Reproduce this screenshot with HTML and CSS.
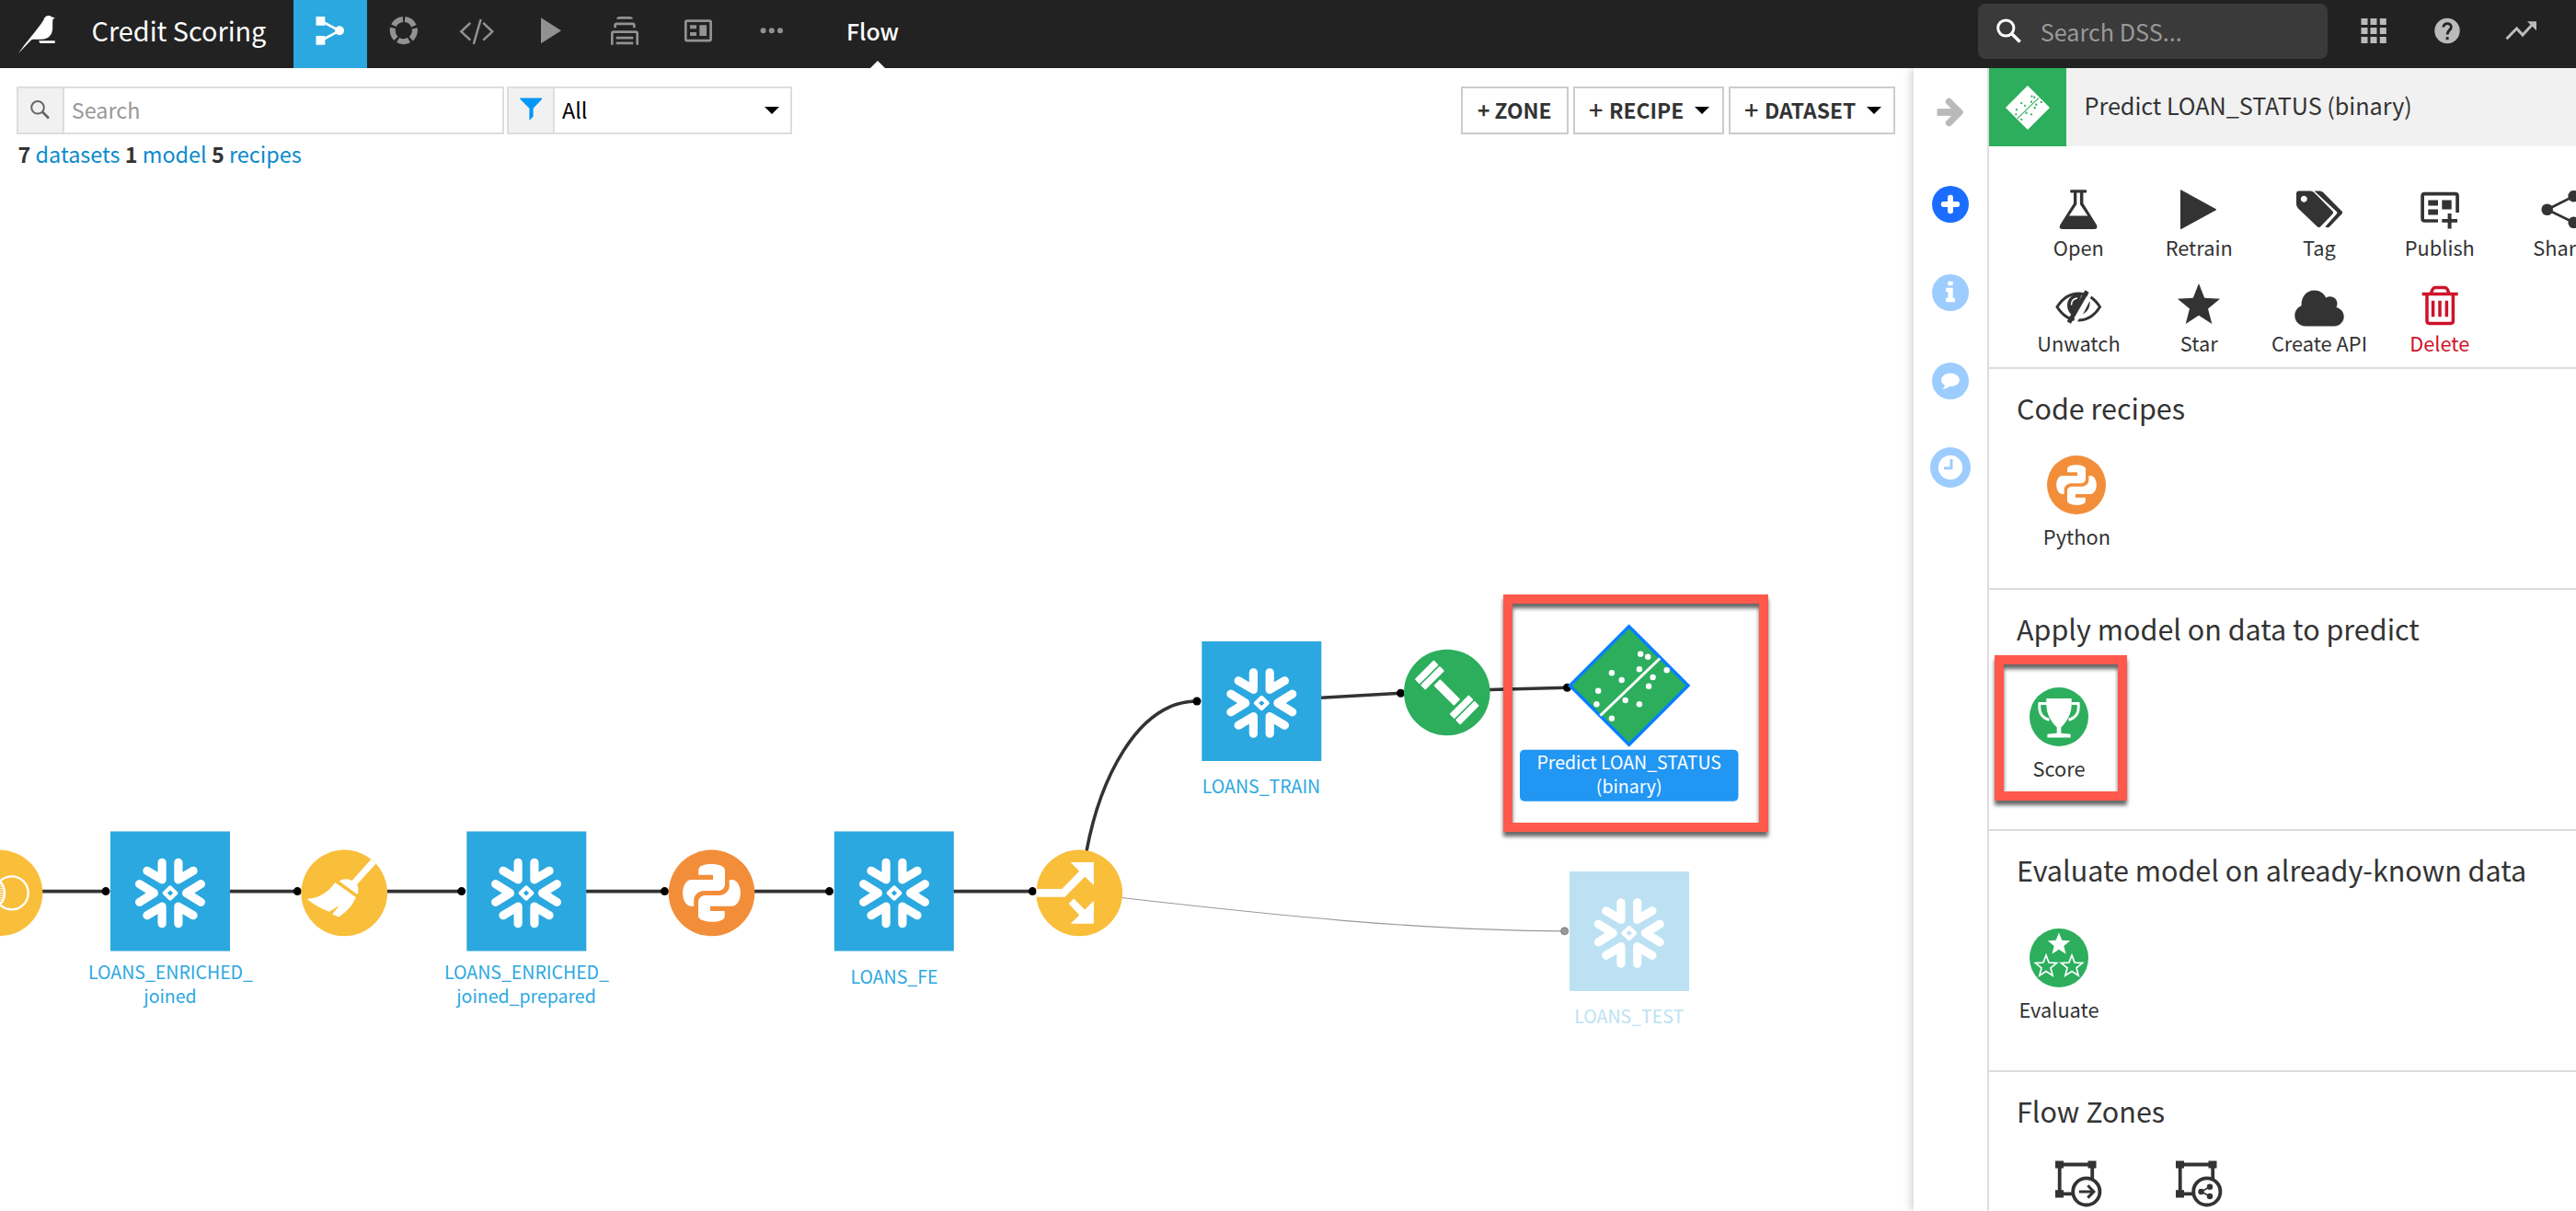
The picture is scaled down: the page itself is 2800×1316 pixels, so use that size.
FILE: index.html
```html
<!DOCTYPE html>
<html lang="en">
<head>
<meta charset="utf-8">
<title>Credit Scoring - Flow</title>
<link rel="stylesheet" href="styles.css">
</head>
<body>
<svg class="defs" width="0" height="0" aria-hidden="true">
  <defs>
    <symbol id="snow" viewBox="-40 -40 80 80" overflow="visible">
      <g fill="none" stroke="#fff" stroke-width="9.2" stroke-linecap="round" stroke-linejoin="round">
        <path d="M33.4-9.8 17.6 0l15.8 9.8M-33.4-9.8-17.6 0l-15.8 9.8"/>
        <path d="M8.9-33.2v18.6l16.2-9.6M-8.9-33.2v18.6l-16.2-9.6M8.9 33.2V14.6l16.2 9.6M-8.9 33.2V14.6l-16.2 9.6"/>
        <path stroke-width="4.4" d="M0-6 6.2 0 0 6-6.2 0z"/>
      </g>
    </symbol>
    <g id="python" fill="#fff">
      <path id="snake" d="M-14.2-19.7V-25C-14.2-29.5-8-31.3 0-31.3S14.5-29 14.5-24.5V-10C14.5-5 11-2.5 6-2.5H-8C-14-2.5-19.3 2-19.3 8v6.3H-22C-28 14.3-31.4 7-31.4 0S-28-14.3-22-14.3H1.5v-5.4z"/>
      <use href="#snake" transform="rotate(180)"/>
    </g>
    <g id="scatter">
      <path fill="none" stroke="currentColor" stroke-width="3" d="M33.5-29.5-31.3 32.7"/>
      <g fill="currentColor">
        <circle cx="12.5" cy="-34.3" r="3.2"/><circle cx="20.5" cy="-31.3" r="3.2"/><circle cx="11.2" cy="-17.7" r="3.2"/>
        <circle cx="-18.8" cy="-13.7" r="3.2"/><circle cx="-8" cy="-6" r="3.2"/><circle cx="41" cy="-16.7" r="3.2"/>
        <circle cx="25.9" cy="-9" r="3.2"/><circle cx="21.4" cy=".7" r="3.2"/><circle cx="-33.5" cy="5.7" r="3.2"/>
        <circle cx="-35.3" cy="20.3" r="3.2"/><circle cx="-4" cy="16" r="3.2"/><circle cx="11.2" cy="20.3" r="3.2"/>
        <circle cx="-18.8" cy="35.7" r="3.2"/>
      </g>
    </g>
    <path id="star" d="M0-24.3 6.2-8.5 23.1-7.5 10 3.2 14.3 19.7 0 10.5-14.3 19.7-10 3.2-23.1-7.5-6.2-8.5z"/>
    <g id="zone">
      <path fill="none" stroke="#333" stroke-width="3.8" d="M-5 11.3h-15.3v-31.8h35.5V-4"/>
      <path fill="#333" d="M-25-24.6h9v8.2h-9zM10.5-24.6h9v8.2h-9zM-25 7.2h9v8.2h-9z"/>
      <circle cx="8.8" cy="8.9" r="14.6" fill="#fff" stroke="#333" stroke-width="3.8"/>
    </g>
  </defs>
</svg>

<header class="topbar">
  <div class="logo">
    <svg width="90" height="74" viewBox="0 0 90 74"><path fill="#fff" d="M47.5 21.5c.6-2.600 2.800-4.400 5.300-4.400 1.600 0 2.600.5 3.500 1.500l3.400.6-2.200 1.800c-.4 2.500-.4 5-.3 8.500.2 8-4.200 13.200-12.200 13.200H36.500c-1.600 0-2.500.5-4 2.200L20 58c4-6 9-12.300 14-18.500 4.500-5.700 10-12 13.500-18z"/><path fill="#fff" d="M42 44.300h17.700v2.600H43.500z"/></svg>
  </div>
  <div class="project">Credit Scoring</div>
  <nav class="nav">
    <span class="tab active"><svg viewBox="0 0 80 74"><path fill="#fff" d="M24.500 18h9.800v9.800h-9.800zM24.500 38.900h9.800v9.800h-9.800z"/><path stroke="#fff" stroke-width="2.600" fill="none" d="M33 24.500 50 33.300 33 42.500"/><circle cx="50" cy="33.300" r="5" fill="#fff"/></svg></span>
    <span class="tab"><svg viewBox="0 0 80 74"><circle cx="39.800" cy="33.100" r="12.100" fill="none" stroke="#929292" stroke-width="6" stroke-dasharray="12.500 2.705" stroke-dashoffset="-1.350" transform="rotate(-90 39.800 33.100)"/></svg></span>
    <span class="tab"><svg viewBox="0 0 80 74"><path fill="none" stroke="#929292" stroke-width="2.500" d="M32.300 24.800 22.300 34.300l10 9.300M46.200 24.800l10 9.500-10 9.300M43.600 21l-7.800 26.800"/></svg></span>
    <span class="tab"><svg viewBox="0 0 80 74"><path fill="#929292" d="M29 19.300 51 33.300 29 47.200z"/></svg></span>
    <span class="tab"><svg viewBox="0 0 80 74"><g fill="none" stroke="#929292" stroke-width="2.700"><path fill="#929292" stroke="none" d="M31 20.800c.5-1.800 1.500-2.700 3.200-2.700h11.600c1.700 0 2.700.9 3.200 2.700z"/><path d="M29.600 30.300v-2.800q0-1.700 1.700-1.700h17.300q1.700 0 1.700 1.700v2.800M26.300 48.800V36.500q0-1.800 1.800-1.800h23.800q1.800 0 1.800 1.800v12.300M30.700 41.100h18.600M30.700 46.900h18.600"/></g></svg></span>
    <span class="tab"><svg viewBox="0 0 80 74"><rect x="26.300" y="22.600" width="27.300" height="21.500" rx="1.500" fill="none" stroke="#929292" stroke-width="2.700"/><path fill="#929292" d="M31 27.300h7v4h-7zM31 35h7v4h-7zM41.300 27.300h7.700V39h-7.700z"/></svg></span>
    <span class="tab"><svg viewBox="0 0 80 74"><g fill="#929292"><circle cx="30.600" cy="33.300" r="3"/><circle cx="39.800" cy="33.300" r="3"/><circle cx="49" cy="33.300" r="3"/></g></svg></span>
  </nav>
  <div class="current">Flow</div>
  <div class="top-search">
    <svg width="50" height="56" viewBox="0 0 50 56"><circle cx="30.300" cy="26.500" r="8.600" fill="none" stroke="#fff" stroke-width="3"/><path stroke="#fff" stroke-width="3.600" d="M36.300 32.300l9.300 9.200"/></svg>
    <span>Search DSS...</span>
  </div>
  <div class="top-icons">
    <svg viewBox="0 0 80 74"><g fill="#bbb"><path d="M26.500 20h7v7h-7zM36.500 20h7v7h-7zM46.800 20h7v7h-7zM26.500 30h7v7h-7zM36.500 30h7v7h-7zM46.800 30h7v7h-7zM26.500 40h7v7h-7zM36.500 40h7v7h-7zM46.800 40h7v7h-7z"/></g></svg>
    <svg viewBox="0 0 80 74"><circle cx="40" cy="33.500" r="13.700" fill="#bbb"/><path fill="none" stroke="#222" stroke-width="2.900" d="M35.900 29.600c0-2.400 1.800-4 4.200-4s4.200 1.600 4.200 3.800c0 3.200-4.200 3.400-4.200 8.100"/><path fill="#222" d="M38.600 40.200h3v3h-3z"/></svg>
    <svg viewBox="0 0 80 74"><path fill="none" stroke="#bbb" stroke-width="3" d="M24.500 42.300l11-11.300 6.500 7 12-13"/><path fill="#bbb" d="M47 23.200h10v10z"/></svg>
  </div>
</header>

<main class="main">
  <section class="flow">
    <div class="toolbar">
      <div class="field search">
        <span class="addon"><svg viewBox="20 96 48 48"><circle cx="41" cy="116.800" r="6.800" fill="none" stroke="#666" stroke-width="2"/><path stroke="#666" stroke-width="2.600" d="M46 121.500l7 7"/></svg></span>
        <span class="ph">Search</span>
      </div>
      <div class="field filter">
        <span class="addon"><svg viewBox="0 0 48 48"><path fill="#0497f8" d="M12.300 10.500h23.500l.3 1.200-9.500 10v9l-4.200 4.200V21.700l-10-10z"/></svg></span>
        <span class="val">All</span>
        <i class="caret"></i>
      </div>
      <div class="buttons">
        <div class="btn zone"><span class="plus">+</span>ZONE</div>
        <div class="btn recipe"><span class="plus">+</span>RECIPE<i class="caret"></i></div>
        <div class="btn dataset"><span class="plus">+</span>DATASET<i class="caret"></i></div>
      </div>
    </div>
    <p class="counts"><b>7</b> <a>datasets</a> <b>1</b> <a>model</a> <b>5</b> <a>recipes</a></p>

    <svg class="graph" width="2080" height="1133" viewBox="0 183 2080 1133">
      <g fill="none" stroke="#333" stroke-width="3.600">
        <path d="M46 968.600h69M250 968.600h73M421 968.600h81M637 968.600h85M820 968.600h82M1036 968.600h86"/>
        <path d="M1181 925C1195 850 1235 762 1301 762M1436 758.200l86.500-4.900M1619 749.500l84.500-2.200"/>
      </g>
      <path fill="none" stroke="#999" stroke-width="1.200" d="M1219 975.500C1380 994 1540 1011 1700 1011.800"/>
      <g fill="#000">
        <circle cx="115" cy="968.600" r="4.500"/><circle cx="323.300" cy="968.600" r="4.500"/><circle cx="501.700" cy="968.600" r="4.500"/>
        <circle cx="722.400" cy="968.600" r="4.500"/><circle cx="901.500" cy="968.600" r="4.500"/><circle cx="1122.300" cy="968.600" r="4.500"/>
        <circle cx="1301" cy="762" r="4.500"/><circle cx="1522.500" cy="753.300" r="4.500"/><circle cx="1703.500" cy="747.300" r="4.500"/>
      </g>
      <circle cx="1700.600" cy="1011.800" r="4" fill="#999" stroke="#808080"/>

      <g transform="translate(-.5 970.400)">
        <circle r="46.800" fill="#f9be3a"/>
        <g fill="none" stroke="#fff" stroke-width="2.400"><circle cx="-12.500" r="18"/><circle cx="13.200" r="18"/></g>
        <path stroke="#fff" stroke-width="1" d="M-2-10h4M-3.500-7.500h7M-4-5h8M-4.500-2.500h9M-4.500 0h9M-4.500 2.500h9M-4 5h8M-3.500 7.500h7M-2 10h4"/>
      </g>
      <g transform="translate(374.200 970.400)">
        <circle r="46.800" fill="#f9be3a"/>
        <path fill="#fff" d="M29-36.500 34.500-32 14-9.500C15.500-6 15.700-2 14.300 1.700L-5.500-13C-1-15.800 4-15.800 8.400-13.300zM-10-11.300 12.600 4.700C9.500 13 3 20.500-6 26l-7-3 7.500-9.300L-16.400 20.300C-25 17-34 12.500-40.400 6.300-28 6.500-17-1-10-11.300z"/>
      </g>
      <g transform="translate(773.500 970.400)"><circle r="46.800" fill="#f28e3a"/><use href="#python"/></g>
      <g transform="translate(1173.200 970.400)">
        <circle r="46.800" fill="#f9be3a"/>
        <path fill="#fff" d="M-46.600-4.300H-19L0-23.700-9.600-33.300h25.300v25L6-17.700-15.700 4.300h-30.900zM-6.100 6 6 18l9.700-9.700v25H-9.600L0 24-11.500 11.700z"/>
      </g>
      <g transform="translate(1572.800 752.500)">
        <circle r="46.800" fill="#2cae5d"/>
        <g transform="rotate(45)" fill="#fff"><rect x="-35" y="-14.700" width="7.400" height="29.400" rx="1"/><rect x="-26" y="-14.700" width="7.400" height="29.400" rx="1"/><rect x="-15.500" y="-4.900" width="31" height="9.800" rx="1"/><rect x="18.600" y="-14.700" width="7.400" height="29.400" rx="1"/><rect x="27.600" y="-14.700" width="7.400" height="29.400" rx="1"/></g>
      </g>

      <g fill="#2ba8df">
        <rect x="120" y="903.500" width="130" height="130"/><rect x="507.300" y="903.500" width="130" height="130"/>
        <rect x="906.800" y="903.500" width="130" height="130"/><rect x="1306.300" y="697" width="130" height="130"/>
        <rect x="1706" y="947" width="130" height="130" fill="#bce1f3"/>
      </g>
      <use href="#snow" x="145" y="930.500" width="80" height="80"/>
      <use href="#snow" x="532" y="930.500" width="80" height="80"/>
      <use href="#snow" x="932" y="930.500" width="80" height="80"/>
      <use href="#snow" x="1331.300" y="724" width="80" height="80"/>
      <use href="#snow" x="1730.800" y="974" width="80" height="80"/>

      <g transform="translate(1770.700 745)" color="#fff"><path fill="#2cae5d" stroke="#087fff" stroke-width="3.400" d="M0-64.300 64.300 0 0 64.300-64.300 0z"/><use href="#scatter"/></g>
      <rect x="1652" y="814.700" width="237.500" height="56" rx="5" fill="#2196f3"/>

      <g class="labels" text-anchor="middle">
        <text x="185.500" y="1064">LOANS_ENRICHED_</text><text x="185" y="1090">joined</text>
        <text x="572.500" y="1064">LOANS_ENRICHED_</text><text x="572" y="1090">joined_prepared</text>
        <text x="972" y="1068.700">LOANS_FE</text>
        <text x="1371" y="861.700">LOANS_TRAIN</text>
        <text class="faded" x="1770.700" y="1111.800">LOANS_TEST</text>
        <text class="picked" x="1770.700" y="836">Predict LOAN_STATUS</text><text class="picked" x="1770.700" y="862">(binary)</text>
      </g>
    </svg>
    <div class="marker marker-model"></div>
  </section>

  <aside class="rail">
    <svg viewBox="-22 -22 44 44"><path fill="none" stroke="#b9b9b9" stroke-width="7.400" stroke-linecap="round" stroke-linejoin="round" d="M-1.500-11.500 10 0-1.500 11.500"/><path stroke="#b9b9b9" stroke-width="7.800" d="M-14.500 0H8" stroke-linecap="butt"/></svg>
    <svg viewBox="-22 -22 44 44"><circle r="20" fill="#1a6dff"/><path stroke="#fff" stroke-width="6" stroke-linecap="round" d="M-7.200 0H7.200M0-7.200V7.200"/></svg>
    <svg viewBox="-22 -22 44 44"><circle r="20" fill="#9dccff"/><path fill="#fff" d="M-2.700-12.200h5.400v4.500h-5.400zM-5-5.300h7.700V5.700H5v4.600H-5V5.700h2.300V-1H-5z"/></svg>
    <svg viewBox="-22 -22 44 44"><circle r="20" fill="#9dccff"/><ellipse cy="-1.200" rx="10" ry="7.200" fill="#fff"/><path fill="#fff" d="M-6 3.500c0 2-.8 3.800-2.500 5.300 3 0 5.500-1 7.500-3.300z"/></svg>
    <svg viewBox="-22 -22 44 44"><circle r="22" fill="#9dccff"/><circle r="13.200" fill="#fff"/><path fill="none" stroke="#9dccff" stroke-width="3" d="M1-9V.7h-8"/></svg>
  </aside>

  <aside class="panel">
    <div class="panel-head">
      <span class="badge"><svg viewBox="-42 -42.500 84 85"><g transform="translate(0 .5)"><path fill="#fff" d="M0-24 24 0 0 24-24 0z"/><g transform="scale(.36)" color="#2cae5d"><use href="#scatter"/></g></g></svg></span>
      <span class="panel-title">Predict LOAN_STATUS (binary)</span>
    </div>
    <div class="actions">
      <div class="act"><svg viewBox="-30 -30 60 60"><path fill="#333" fill-rule="evenodd" d="M-8-17.800H8.300q.9 0 .9 1.600t-.9 1.700H5.400V-3L20 20.500q1.500 4.400-2 4.400h-35.800q-3.600 0-2-4.400L-5-3v-11.500h-3q-.9 0-.9-1.700t.9-1.600zM-1.700-14.500V-2L-10 10.500h20.300L1.900-2v-12.500z"/></svg><span>Open</span></div>
      <div class="act"><svg viewBox="-30 -30 60 60"><path fill="#333" stroke="#333" stroke-linejoin="round" d="M-19.500-17.300 18.800 3.800l-38.300 20.900z"/></svg><span>Retrain</span></div>
      <div class="act"><svg viewBox="-30 -30 60 60"><path fill="#333" fill-rule="evenodd" d="M-25-13.500q0-3 3-3H-9.500q2 0 3.600 1.500L14.500 5.400q1.400 1.500 0 3L1 22.400q-1.500 1.400-3 0L-23 2.400q-2-2-2-4.400zM-16.700-11.300a3.500 3.500 0 1 0 .01 0z"/><path fill="#333" d="M-5.500-16.500H.5q2 0 3.600 1.500L24.500 5.400q1.400 1.500 0 3L11 22.400q-1.800 1.600-4.500-.2L18.800 8.500q1.200-1.300 0-2.600z"/></svg><span>Tag</span></div>
      <div class="act"><svg viewBox="-30 -30 60 60"><path fill="none" stroke="#333" stroke-width="3.700" d="M-2 16h-14.500q-2.400 0-2.400-2.400V-11q0-2.400 2.400-2.400h33.200q2.400 0 2.400 2.400V7"/><path fill="#333" d="M-12.700-6.500H-2v6h-10.700zM-12.700 3.500H-2v6h-10.700zM2.300-6.500h10.400v10H2.300zM8.600 8h4v16.500h-4z"/><path fill="#333" d="M2.300 14H19v3.800H2.300z"/></svg><span>Publish</span></div>
      <div class="act"><svg viewBox="-30 -30 60 60"><path fill="none" stroke="#333" stroke-width="2.800" d="M14.700-10.800-14.300 3.800l29 14"/><g fill="#333"><circle cx="-14.300" cy="3.800" r="6.300"/><circle cx="14.700" cy="-10.800" r="6.300"/><circle cx="14.700" cy="17.800" r="6.300"/></g></svg><span>Share</span></div>
      <div class="act"><svg viewBox="-30 -30 60 60"><path fill="none" stroke="#333" stroke-width="3" d="M-23 5.500C-17-4 -9-9 .3-9S17.500-4 23.500 5.500C17.500 15 9.500 20 .3 20S-17 15-23 5.500z"/><path fill="#333" d="M4-8.500C-5-10-12-4-12 3.500c0 5 2.500 9.500 6.500 12z"/><path fill="none" stroke="#fff" stroke-width="1.600" d="M-7.500 3.500c0-4 2.500-7 6.500-7.500"/><path stroke="#fff" stroke-width="4" d="M15-12-4.500 24"/><path stroke="#333" stroke-width="4.800" d="M9.500-11.500-10.200 22.500"/><path fill="#333" d="M12.500-1C13 5 11 10 5 13.500z"/></svg><span>Unwatch</span></div>
      <div class="act"><svg viewBox="-30 -30 60 60"><use href="#star" y="4.300" fill="#333"/></svg><span>Star</span></div>
      <div class="act"><svg viewBox="-30 -30 60 60"><path fill="#333" d="M-15 26.500C-21.500 26.500-26.700 21.300-26.700 15c0-4.800 3-9 7.300-10.700C-20-5-14-12.500-5.500-12.500c5.800 0 10.500 3.200 12.700 8C12.500-7.500 19.500-4.500 19.500 2c0 1.500-.4 2.900-1.200 4 5 1 8.400 5 8.400 10 0 5.800-4.700 10.500-10.700 10.500z"/></svg><span>Create API</span></div>
      <div class="act danger"><svg viewBox="-30 -30 60 60"><g fill="none" stroke="#ce1228" stroke-width="3.500"><path d="M-19.300-8.600h39M-9.500-9c1-4.500 2-6.600 4.500-6.600H5.300c2.500 0 3.500 2.100 4.500 6.600M-14-8.500v29.300q0 2.600 2.600 2.600h23.200q2.600 0 2.600-2.600V-8.500M-7.400-1.200v17.500M0-1.200v17.500M7.400-1.200v17.500"/></g></svg><span>Delete</span></div>
    </div>
    <div class="section code">
      <h2>Code recipes</h2>
      <div class="items"><div class="item"><svg viewBox="-32 -32 64 64"><circle r="32" fill="#f28e3a"/><use href="#python" transform="scale(.695)"/></svg><span>Python</span></div></div>
    </div>
    <div class="section">
      <h2>Apply model on data to predict</h2>
      <div class="items round"><div class="item"><svg viewBox="-32 -32 64 64"><circle r="32" fill="#2cae5d"/><path fill="#fff" d="M-13.700-20h27.400v4C14-8 12.500 1 2.300 11.500v6.300l10.300 1v3.800h-25.200v-3.800l10.300-1v-6.300C-12.500 1-14-8-13.700-16z"/><path fill="none" stroke="#fff" stroke-width="3" d="M-13.500-14.600h-7.600C-22-5-19.500 1-10.500 3.200M13.500-14.600h7.600C22-5 19.500 1 10.500 3.200"/></svg><span>Score</span></div></div>
    </div>
    <div class="section">
      <h2>Evaluate model on already-known data</h2>
      <div class="items round"><div class="item"><svg viewBox="-32 -32 64 64"><circle r="32" fill="#2cae5d"/><use href="#star" fill="#fff" transform="translate(0 -14.700) scale(.53)"/><g fill="none" stroke="#fff" stroke-width="3.400"><use href="#star" transform="translate(-14 9.300) scale(.5)"/><use href="#star" transform="translate(14 9.300) scale(.5)"/></g></svg><span>Evaluate</span></div></div>
    </div>
    <div class="section last">
      <h2>Flow Zones</h2>
      <div class="items zones">
        <div class="item"><svg viewBox="-30 -30 60 60"><use href="#zone"/><path fill="none" stroke="#333" stroke-width="3" d="M.8 8.900h15M10.300 2.200l6.600 6.700-6.600 6.700"/></svg></div>
        <div class="item"><svg viewBox="-30 -30 60 60"><use href="#zone"/><path fill="none" stroke="#333" stroke-width="1.600" d="M12 3.800 2.500 9l9.500 5"/><g fill="#333"><circle cx="2.500" cy="9" r="3.200"/><circle cx="12" cy="3.800" r="3.200"/><circle cx="12" cy="14" r="3.200"/></g></svg></div>
      </div>
    </div>
    <div class="marker marker-score"></div>
  </aside>
</main>
</body>
</html>
```
FILE: styles.css
```css
* { box-sizing: border-box; }
body {
  margin: 0;
  width: 2800px;
  height: 1316px;
  overflow: hidden;
  background: #fff;
  color: #333;
  font-family: "Noto Sans CJK SC", "Noto Sans", sans-serif;
}
svg { display: block; flex: none; }
.defs { position: absolute; }

/* top bar */
.topbar { display: flex; height: 74px; background: #222; color: #fff; }
.project { width: 229px; padding-left: 9.600px; font-size: 28.800px; line-height: 65px; white-space: nowrap; }
.nav { display: flex; }
.tab { width: 80px; height: 74px; }
.tab.active { background: #2ba8df; }
.current {
  position: relative;
  margin-left: 41px;
  width: 68px;
  font-size: 24.800px;
  font-weight: 500;
  line-height: 67px;
}
.current::after {
  content: "";
  position: absolute;
  left: 26px;
  bottom: 0;
  border: 8px solid transparent;
  border-top: 0;
  border-bottom-color: #fff;
}
.top-search {
  display: flex;
  margin: 4px 0 0 auto;
  width: 380px;
  height: 60px;
  border-radius: 8px;
  background: #3a3a3a;
  color: #999;
  font-size: 25.200px;
  line-height: 61px;
}
.top-search svg + span { margin-left: 17.700px; }
.top-icons { display: flex; width: 270px; padding-left: 10px; }
.top-icons svg { width: 80px; height: 74px; }

.main { display: flex; height: 1242px; }

/* flow canvas */
.flow { position: relative; width: 2080px; }
.toolbar { display: flex; padding: 20px 20px 0 18px; }
.field {
  display: flex;
  height: 52px;
  border: 2px solid #ddd;
  font-size: 23.400px;
  line-height: 46px;
}
.addon { width: 50px; border-right: 2px solid #ddd; background: #f1f1f1; }
.addon svg { width: 48px; height: 48px; }
.search { width: 530px; margin-right: 3px; }
.filter { width: 310px; color: #000; }
.ph { padding-left: 7.800px; color: #999; }
.val { padding-left: 8px; }
.caret {
  width: 0;
  height: 0;
  border: 8px solid transparent;
  border-top-color: #000;
  border-bottom: 0;
}
.filter .caret { margin: 20px 12px 0 auto; }
.buttons { display: flex; margin-left: auto; }
.btn {
  display: flex;
  height: 52px;
  border: 2px solid #ccc;
  font-size: 22.800px;
  font-weight: 700;
  line-height: 47px;
}
.btn .caret { margin: 20px 0 0 12px; }
.zone { width: 117px; padding-left: 16px; margin-right: 5px; }
.recipe { width: 164px; padding-left: 15px; margin-right: 5px; }
.dataset { width: 181px; padding-left: 15px; }
.plus { width: 18.500px; }
.recipe .plus, .dataset .plus { width: 22px; font-size: 27px; font-weight: 500; line-height: 45px; }
.counts { margin: 4.200px 0 0 19.500px; font-size: 23.400px; line-height: 34px; }
.counts a { color: #0a8bcd; }
.graph { margin-top: -1.200px; }
.labels { font-size: 19.500px; fill: #2ba8df; }
.labels .faded { fill: #bce1f3; }
.labels .picked { fill: #fff; }

/* annotation frames */
.marker {
  position: absolute;
  border: 10px solid #ff584c;
  filter: drop-shadow(0 5px 2px rgba(0, 0, 0, .6));
}
.marker-model { left: 1634px; top: 572px; width: 288px; height: 258px; }
.marker-score { left: 6px; top: 638px; width: 144px; height: 158px; }

/* icon rail */
.rail {
  display: flex;
  flex-direction: column;
  align-items: center;
  width: 80px;
  padding-top: 26px;
  background: #fff;
  box-shadow: -2px 0 10px rgba(0, 0, 0, .2);
  clip-path: inset(0 0 0 -20px);
}
.rail svg { width: 44px; height: 44px; margin-bottom: 52px; }
.rail svg:nth-child(1) { margin-bottom: 56px; }
.rail svg:nth-child(4) { margin-bottom: 50px; }

/* right panel */
.panel { position: relative; width: 640px; border-left: 2px solid #ddd; background: #fff; overflow: hidden; }
.panel-head { display: flex; height: 85px; background: #f1f1f1; font-size: 25.200px; line-height: 81px; }
.badge { width: 84px; height: 85px; background: #2cae5d; }
.panel-title { padding-left: 19.500px; letter-spacing: -.03px; }
.actions {
  display: grid;
  grid-template-columns: repeat(5, 130.800px);
  grid-auto-rows: 104px;
  height: 242px;
  padding: 34.500px 0 0 32px;
  border-bottom: 2px solid #ddd;
}
.act, .item {
  display: flex;
  flex-direction: column;
  align-items: center;
  width: 130.800px;
  font-size: 21.800px;
  line-height: 30px;
}
.act svg { width: 60px; height: 60px; }
.act:nth-child(n+6) span { margin-top: .5px; }
.danger { color: #ce1228; }
.section { height: 262px; padding: 21.700px 0 0 30px; border-bottom: 2px solid #ddd; }
.section.code { height: 240px; }
.section.last { border: 0; }
h2 { margin: 0; font-size: 30.500px; font-weight: 400; line-height: 40px; white-space: nowrap; }
.items { display: flex; margin: 32.300px 0 0 0; }
.items.round { margin: 44.300px 0 0 -19.400px; }
.items.zones { margin: 29.300px 0 0 1.500px; }
.item svg { width: 64px; height: 64px; margin-bottom: 9.500px; }
.zones svg { width: 60px; height: 60px; }
```
